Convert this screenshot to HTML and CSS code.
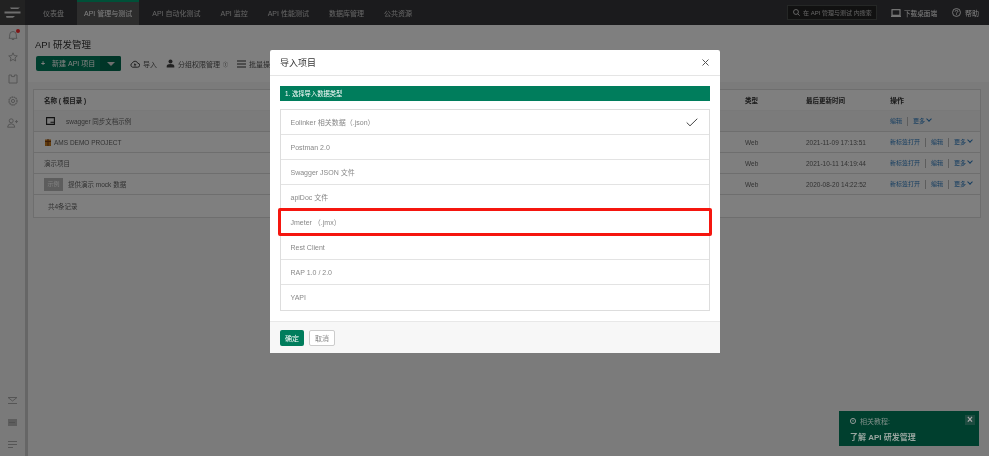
FILE: index.html
```html
<!DOCTYPE html>
<html lang="zh-CN">
<head>
    <meta charset="UTF-8">
    <title>API 研发管理</title>
    <link rel="stylesheet" href="styles.css">
</head>
<body>
    <header class="topbar">
        <div class="logo">
            <svg width="17" height="13" viewBox="0 0 17 13"><path d="M6 1.500 L16 1.500 L14 3 H7 Z M.5 5.500 H16.500 V7.500 H.5 Z M2 10 H11 L9 11.800 H2.500 Z" fill="#ddd"/></svg>
        </div>
        <nav class="nav">
            <a class="nav-item">仪表盘</a>
            <a class="nav-item active">API 管理与测试</a>
            <a class="nav-item">API 自动化测试</a>
            <a class="nav-item">API 监控</a>
            <a class="nav-item">API 性能测试</a>
            <a class="nav-item">数据库管理</a>
            <a class="nav-item">公共资源</a>
        </nav>
        <div class="top-right">
            <div class="search">
                <svg width="7" height="7" viewBox="0 0 8 8"><circle cx="3.400" cy="3.400" r="2.800" stroke="#ddd" fill="none"/><path d="M5.400 5.400 L7.600 7.600" stroke="#ddd"/></svg>
                <span>在 API 管理与测试 内搜索</span>
            </div>
            <a class="top-link download">
                <svg width="10" height="8" viewBox="0 0 10 8"><rect x="1" y="0.700" width="8" height="5.600" stroke="#fff" stroke-width="1.100" fill="none"/><path d="M0 7.300 H10" stroke="#fff" stroke-width="1.200"/></svg>
                下载桌面端
            </a>
            <a class="top-link">
                <svg width="9" height="9" viewBox="0 0 10 10"><circle cx="5" cy="5" r="4.400" stroke="#fff" fill="none"/><path d="M3.500 4 Q3.600 2.600 5 2.600 Q6.500 2.600 6.500 3.800 Q6.500 4.600 5 5.400 V6.200 M5 7 V7.900" stroke="#fff" fill="none"/></svg>
                帮助
            </a>
        </div>
    </header>

    <div class="layout">
        <aside class="sidebar">
            <div class="side-top">
                <span class="side-icon bell">
                    <svg width="10" height="11" viewBox="0 0 10 11"><path d="M5 1.500 A3.300 3.300 0 0 1 8.300 4.800 V7 L9 8.300 H1 L1.700 7 V4.800 A3.300 3.300 0 0 1 5 1.500 Z M3.800 9.500 H6.200" stroke="#aaa" fill="none"/></svg>
                    <i class="dot"></i>
                </span>
                <span class="side-icon"><svg width="10" height="10" viewBox="0 0 10 10"><path d="M5 .8 L6.200 3.600 L9.300 3.900 L7 5.900 L7.700 9 L5 7.400 L2.300 9 L3 5.900 L.7 3.900 L3.800 3.600 Z" stroke="#aaa" fill="none"/></svg></span>
                <span class="side-icon"><svg width="10" height="10" viewBox="0 0 10 10"><path d="M1 1 H3.600 V2.600 H6.400 V1 H9 V9 H1 Z" stroke="#aaa" fill="none"/></svg></span>
                <span class="side-icon"><svg width="10" height="10" viewBox="0 0 10 10"><circle cx="5" cy="5" r="4" stroke="#aaa" stroke-width="1.300" stroke-dasharray="1.600 .5" fill="none"/><circle cx="5" cy="5" r="1.600" stroke="#aaa" fill="none"/></svg></span>
                <span class="side-icon"><svg width="11" height="10" viewBox="0 0 11 10"><circle cx="4.200" cy="2.800" r="2" stroke="#aaa" fill="none"/><path d="M.6 9.200 Q.8 5.800 4.200 5.800 Q7.600 5.800 7.800 9.200 Z M8 3.600 H11 M9.500 2.100 V5.100" stroke="#aaa" fill="none"/></svg></span>
            </div>
            <div class="side-bottom">
                <span class="side-icon"><svg width="9" height="7" viewBox="0 0 9 7"><path d="M0 .5 H9 L4.500 4 Z M0 6.500 H9" stroke="#aaa" fill="none"/></svg></span>
                <span class="side-icon"><svg width="9" height="7" viewBox="0 0 9 7"><rect width="9" height="7" fill="#bbb"/><path d="M1.500 3.500 H7.500" stroke="#888" stroke-dasharray="1 1"/></svg></span>
                <span class="side-icon"><svg width="9" height="7" viewBox="0 0 9 7"><path d="M0 .5 H9 M0 3.500 H9 M0 6.500 H5" stroke="#aaa"/></svg></span>
            </div>
        </aside>
        <div class="side-strip"></div>

        <main class="main">
            <section class="page-head">
                <h1 class="page-title">API 研发管理</h1>
                <div class="toolbar">
                    <div class="new-btn">
                        <span class="new-label"><b>+</b> 新建 API 项目</span>
                        <span class="new-caret"><i></i></span>
                    </div>
                    <a class="tool">
                        <svg width="10" height="8" viewBox="0 0 10 8"><path d="M2.500 7.200 A2.200 2.200 0 0 1 2.400 3 A2.800 2.800 0 0 1 7.700 3.200 A2 2 0 0 1 7.600 7.200 Z M5 6.500 V3.800 M3.900 4.900 L5 3.800 L6.100 4.900" stroke="#444" fill="none"/></svg>
                        导入
                    </a>
                    <a class="tool">
                        <svg width="9" height="9" viewBox="0 0 9 9"><circle cx="4.500" cy="2.400" r="2" fill="#444"/><path d="M.7 8.600 V7 Q.9 5 4.500 5 Q8.100 5 8.300 7 V8.600 Z" fill="#444"/></svg>
                        分组权限管理 <small class="info">①</small>
                    </a>
                    <a class="tool">
                        <svg width="9" height="8" viewBox="0 0 9 8"><path d="M0 1 H9 M0 4 H9 M0 7 H9" stroke="#333" stroke-width="1.200"/></svg>
                        批量操作
                    </a>
                </div>
            </section>

            <section class="content">
                <div class="panel">
                    <div class="row row-head">
                        <span class="col-name">名称 ( 根目录 )</span>
                        <span class="col-type">类型</span>
                        <span class="col-time">最后更新时间</span>
                        <span class="col-ops">操作</span>
                    </div>
                    <div class="row row-folder">
                        <span class="col-name">
                            <svg class="folder" width="9" height="8" viewBox="0 0 9 8"><path d="M.6 .6 H8.400 V7.400 H.6 Z M4.500 5.200 H8" stroke="#222" stroke-width="1.100" fill="none"/></svg>
                            swagger 同步文档示例
                        </span>
                        <span class="col-type"></span>
                        <span class="col-time"></span>
                        <span class="col-ops"><a>编辑</a><a class="more">更多</a></span>
                    </div>
                    <div class="row">
                        <span class="col-name gift">
                            <svg width="6" height="8" viewBox="0 0 6 8"><rect y="1.500" width="6" height="6.500" fill="#c77a1c"/><path d="M3 1 V8 M0 3.500 H6" stroke="#7a3a10"/></svg>
                            AMS DEMO PROJECT
                        </span>
                        <span class="col-type">Web</span>
                        <span class="col-time">2021-11-09 17:13:51</span>
                        <span class="col-ops"><a>新标签打开</a><a>编辑</a><a class="more">更多</a></span>
                    </div>
                    <div class="row">
                        <span class="col-name">演示项目</span>
                        <span class="col-type">Web</span>
                        <span class="col-time">2021-10-11 14:19:44</span>
                        <span class="col-ops"><a>新标签打开</a><a>编辑</a><a class="more">更多</a></span>
                    </div>
                    <div class="row">
                        <span class="col-name with-badge"><em class="badge">示例</em>提供演示 mock 数据</span>
                        <span class="col-type">Web</span>
                        <span class="col-time">2020-08-20 14:22:52</span>
                        <span class="col-ops"><a>新标签打开</a><a>编辑</a><a class="more">更多</a></span>
                    </div>
                    <div class="row row-foot">共4条记录</div>
                </div>
            </section>
        </main>
    </div>

    <div class="mask"></div>

    <div class="modal">
        <div class="modal-head">
            <span>导入项目</span>
            <svg width="7" height="7" viewBox="0 0 7 7"><path d="M.5 .5 L6.500 6.500 M6.500 .5 L.5 6.500" stroke="#555"/></svg>
        </div>
        <div class="modal-body">
            <div class="step">1. 选择导入数据类型</div>
            <ul class="types">
                <li>Eolinker 相关数据（.json）
                    <svg width="12" height="9" viewBox="0 0 12 9"><path d="M.7 4.500 L4 7.800 L11.300 .7" stroke="#444" fill="none"/></svg>
                </li>
                <li>Postman 2.0</li>
                <li>Swagger JSON 文件</li>
                <li>apiDoc 文件</li>
                <li class="marked">Jmeter （.jmx）<i class="red-box"></i></li>
                <li>Rest Client</li>
                <li>RAP 1.0 / 2.0</li>
                <li>YAPI</li>
            </ul>
        </div>
        <div class="modal-foot">
            <button class="btn-ok">确定</button>
            <button class="btn-cancel">取消</button>
        </div>
    </div>

    <div class="tip">
        <div class="tip-title">
            <svg width="6" height="6" viewBox="0 0 10 10"><circle cx="5" cy="5" r="4.300" stroke="#aaa" stroke-width="1.400" fill="none"/><path d="M5 3 V6" stroke="#aaa" stroke-width="1.400"/></svg>
            相关教程:
        </div>
        <div class="tip-text">了解 API 研发管理</div>
        <span class="tip-close">×</span>
    </div>
</body>
</html>
```

FILE: styles.css
```css
* {
    box-sizing: border-box;
}

html, body {
    margin: 0;
    height: 456px;
    overflow: hidden;
}

body {
    position: relative;
    font-family: "Liberation Sans", "Noto Sans CJK SC", sans-serif;
    font-size: 7px;
    color: #555;
    background: #fff;
    filter: blur(0.3px);
}

/* top bar */
.topbar {
    display: flex;
    align-items: stretch;
    height: 25px;
    background: #36363a;
}

.logo {
    display: flex;
    align-items: center;
    justify-content: center;
    width: 25px;
    background: #444;
}

.nav {
    display: flex;
    gap: 6px;
    margin-left: 11px;
}

.nav-item {
    display: flex;
    align-items: center;
    padding: 0 7px;
    color: #ccc;
}

.nav-item.active {
    background: #5a5a5a;
    border-top: 2px solid #00a070;
    padding-bottom: 2px;
    color: #fff;
}

.top-right {
    display: flex;
    align-items: center;
    margin-left: auto;
    padding-right: 10px;
}

.search {
    display: flex;
    align-items: center;
    gap: 3px;
    width: 90px;
    height: 15px;
    padding-left: 5px;
    border: 1px solid #4a4f4c;
    background: #222;
    color: #ccc;
    font-size: 6px;
    white-space: nowrap;
    margin-right: 14px;
}

.top-link {
    display: flex;
    align-items: center;
    gap: 4px;
    color: #fff;
}

.top-link.download {
    gap: 3px;
    margin-right: 15px;
    font-size: 6.600px;
}

/* side */
.layout {
    display: flex;
    height: 431px;
}

.sidebar {
    display: flex;
    flex: none;
    flex-direction: column;
    justify-content: space-between;
    width: 25px;
    background: #f5f5f5;
    padding-bottom: 1px;
}

.side-top, .side-bottom {
    display: flex;
    flex-direction: column;
}

.side-top {
    margin-top: -1px;
}

.side-icon {
    position: relative;
    display: flex;
    align-items: center;
    justify-content: center;
    height: 22px;
}

.side-strip {
    flex: none;
    width: 3px;
    background: #ccc;
}

.dot {
    position: absolute;
    top: 5px;
    right: 5px;
    width: 4px;
    height: 4px;
    border-radius: 50%;
    background: #ff2a2a;
}

/* main */
.main {
    flex: 1;
    min-width: 0;
    display: flex;
    flex-direction: column;
    background: #fff;
}

.page-head {
    height: 57px;
    padding: 14px 0 0 7px;
    background: #fff;
}

.page-title {
    margin: 0 0 6px;
    font-size: 9.500px;
    line-height: 11px;
    font-weight: normal;
    color: #333;
}

.toolbar {
    display: flex;
    align-items: center;
    gap: 9px;
}

.new-btn {
    display: flex;
    width: 85px;
    height: 15px;
    margin-left: 1px;
    color: #fff;
    background: #007d5c;
    border-radius: 2px;
}

.new-label {
    flex: 1;
    line-height: 15px;
    padding-left: 5px;
    white-space: nowrap;
}

.new-label b {
    margin-right: 5px;
}

.new-caret {
    display: flex;
    align-items: center;
    justify-content: center;
    width: 21px;
    background: #006b4f;
    border-radius: 0 2px 2px 0;
}

.new-caret i {
    border-style: solid;
    border-width: 4px 4px 0;
    border-color: #ddd transparent transparent;
}

.tool {
    display: flex;
    align-items: center;
    gap: 3px;
    color: #555;
    white-space: nowrap;
}

.info {
    font-size: 5px;
}

.content {
    flex: 1;
    padding: 7px 8px 0 5px;
    background: #f6f6f6;
}

.panel {
    border: 1px solid #ddd;
    background: #fff;
}

.row {
    display: flex;
    align-items: center;
    height: 21.100px;
    padding-left: 10px;
    border-bottom: 1px solid #ddd;
    color: #666;
    font-size: 6.500px;
    white-space: nowrap;
}

.row:last-child {
    border-bottom: 0;
}

.row-head {
    background: #fff;
    border-bottom-color: #f2f2f2;
    font-weight: bold;
    color: #333;
}

.row-folder {
    background: #f7f7f7;
}

.row-foot {
    padding-left: 14px;
}

.col-name {
    display: flex;
    align-items: center;
    flex: none;
    width: 701px;
}

.col-type {
    flex: none;
    width: 61px;
}

.col-time {
    flex: none;
    width: 84px;
}

.col-ops {
    display: flex;
    flex: none;
    color: #2a7ac0;
    font-size: 6px;
}

.col-ops a {
    padding: 0 5px;
    border-left: 1px solid #bbb;
    line-height: 9px;
}

.col-ops a:first-child {
    padding-left: 0;
    border-left: 0;
}

.col-ops .more::after {
    content: "";
    display: inline-block;
    width: 3px;
    height: 3px;
    margin: 0 0 2px 2px;
    border-right: 0.6px solid #2a7ac0;
    border-bottom: 0.6px solid #2a7ac0;
    transform: rotate(45deg);
}

.row-head .col-ops {
    color: #333;
    font-size: 7px;
}

.folder {
    margin: 0 11px 0 2px;
}

.gift svg {
    margin: 0 3px 0 1px;
}

.badge {
    width: 19px;
    height: 13px;
    margin-right: 5px;
    line-height: 13px;
    text-align: center;
    font-style: normal;
    color: #fff;
    background: #bbb;
    font-size: 6px;
}

/* dialog */
.mask {
    position: absolute;
    inset: 0;
    background: rgba(0, 0, 0, 0.5);
}

.modal {
    position: absolute;
    left: 270px;
    top: 50px;
    width: 450px;
    height: 303px;
    display: flex;
    flex-direction: column;
    background: #fff;
    border-radius: 2px;
}

.modal-head {
    display: flex;
    align-items: center;
    justify-content: space-between;
    height: 26px;
    padding: 0 11px 0 10px;
    border-bottom: 1px solid #e5e5e5;
    font-size: 9px;
    color: #333;
}

.modal-body {
    flex: 1;
    padding: 10px 10px 0;
}

.step {
    height: 15px;
    padding-left: 5px;
    line-height: 15px;
    background: #007d5c;
    color: #fff;
    font-size: 6.300px;
}

.types {
    margin: 8px 0 0;
    padding: 0;
    list-style: none;
    border: 1px solid #ddd;
    height: 202px;
}

.types li {
    position: relative;
    display: flex;
    align-items: center;
    justify-content: space-between;
    height: 25px;
    padding: 0 11px 0 9.500px;
    border-bottom: 1px solid #e3e3e3;
    color: #888;
    font-size: 7px;
}

.types li:last-child {
    border-bottom: 0;
}

.red-box {
    position: absolute;
    left: -3px;
    right: -3px;
    top: -2px;
    bottom: -2px;
    border: 3px solid #f5160f;
    border-radius: 2px;
}

.modal-foot {
    display: flex;
    align-items: center;
    gap: 5px;
    height: 32px;
    padding: 0 10px;
    background: #f7f7f7;
    border-top: 1px solid #e8e8e8;
}

.modal-foot button {
    height: 16px;
    padding: 0;
    font: inherit;
    border-radius: 2px;
}

.btn-ok {
    width: 24px;
    border: 0;
    color: #fff;
    background: #007d5c;
}

.btn-cancel {
    width: 26px;
    border: 1px solid #ccc;
    color: #888;
    background: #fff;
}

/* tip */
.tip {
    position: absolute;
    left: 839px;
    top: 411px;
    width: 140px;
    height: 35px;
    padding: 5px 0 0 11px;
    background: #003f2e;
}

.tip-title {
    display: flex;
    align-items: center;
    gap: 4px;
    color: #7f8f89;
    margin-bottom: 5px;
}

.tip-text {
    font-weight: bold;
    font-size: 8px;
    color: #98a6a0;
}

.tip-close {
    position: absolute;
    top: 4px;
    right: 4px;
    width: 10px;
    height: 10px;
    line-height: 10px;
    text-align: center;
    font-weight: bold;
    font-size: 10px;
    color: #aaa;
    background: #1d4c40;
}
```
